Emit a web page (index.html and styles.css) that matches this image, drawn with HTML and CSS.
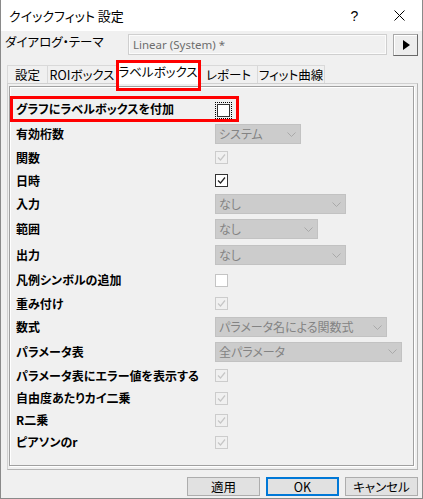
FILE: index.html
```html
<!DOCTYPE html>
<html lang="ja">
<head>
<meta charset="utf-8">
<title>クイックフィット 設定</title>
<link rel="stylesheet" href="styles.css">
</head>
<body>
<div class="window">
  <div class="titlebar">
    <span class="title">クイックフィット 設定</span>
    <span class="tb-btn help">?</span>
    <span class="tb-btn close"><svg width="11" height="11" viewBox="0 0 11 11"><path d="M0.5 0.5 L10.5 10.5 M10.5 0.5 L0.5 10.5" stroke="#000" stroke-width="1" fill="none"/></svg></span>
  </div>

  <div class="theme">
    <span class="theme-label">ダイアログ・テーマ</span>
    <div class="theme-box">Linear (System) *</div>
    <div class="arrow-btn"><svg width="7" height="10" viewBox="0 0 7 10"><polygon points="0,0 7,5 0,10" fill="#000"/></svg></div>
  </div>

  <div class="tabs">
    <div class="tab t1">設定</div>
    <div class="tab t2">ROIボックス</div>
    <div class="tab t3 active">ラベルボックス</div>
    <div class="tab t4">レポート</div>
    <div class="tab t5">フィット曲線</div>
  </div>

  <div class="page">
    <div class="group">
      <div class="hl-row">
        <span class="label">グラフにラベルボックスを付加</span>
        <span class="focus"><span class="cb on"></span></span>
      </div>
      <div class="grid">
        <span class="label">有効桁数</span>
        <div class="dd w86"><span>システム</span><svg class="chev" width="9" height="5" viewBox="0 0 9 5"><polyline points="0.5,0.5 4.5,4.5 8.5,0.5"/></svg></div>

        <span class="label">関数</span>
        <span class="cb off"><svg width="11" height="11" viewBox="0 0 11 11"><polyline points="2,5.5 4.5,8 9,2.5"/></svg></span>

        <span class="label">日時</span>
        <span class="cb on"><svg width="11" height="11" viewBox="0 0 11 11"><polyline points="2,5.5 4.5,8 9,2.5"/></svg></span>

        <span class="label">入力</span>
        <div class="dd w131"><span>なし</span><svg class="chev" width="9" height="5" viewBox="0 0 9 5"><polyline points="0.5,0.5 4.5,4.5 8.5,0.5"/></svg></div>

        <span class="label">範囲</span>
        <div class="dd w103"><span>なし</span><svg class="chev" width="9" height="5" viewBox="0 0 9 5"><polyline points="0.5,0.5 4.5,4.5 8.5,0.5"/></svg></div>

        <span class="label">出力</span>
        <div class="dd w131"><span>なし</span><svg class="chev" width="9" height="5" viewBox="0 0 9 5"><polyline points="0.5,0.5 4.5,4.5 8.5,0.5"/></svg></div>

        <span class="label">凡例シンボルの追加</span>
        <span class="cb empty"></span>

        <span class="label">重み付け</span>
        <span class="cb off"><svg width="11" height="11" viewBox="0 0 11 11"><polyline points="2,5.5 4.5,8 9,2.5"/></svg></span>

        <span class="label">数式</span>
        <div class="dd w172"><span>パラメータ名による関数式</span><svg class="chev" width="9" height="5" viewBox="0 0 9 5"><polyline points="0.5,0.5 4.5,4.5 8.5,0.5"/></svg></div>

        <span class="label">パラメータ表</span>
        <div class="dd w187"><span>全パラメータ</span><svg class="chev" width="9" height="5" viewBox="0 0 9 5"><polyline points="0.5,0.5 4.5,4.5 8.5,0.5"/></svg></div>

        <span class="label">パラメータ表にエラー値を表示する</span>
        <span class="cb off"><svg width="11" height="11" viewBox="0 0 11 11"><polyline points="2,5.5 4.5,8 9,2.5"/></svg></span>

        <span class="label">自由度あたりカイ二乗</span>
        <span class="cb off"><svg width="11" height="11" viewBox="0 0 11 11"><polyline points="2,5.5 4.5,8 9,2.5"/></svg></span>

        <span class="label">R二乗</span>
        <span class="cb off"><svg width="11" height="11" viewBox="0 0 11 11"><polyline points="2,5.5 4.5,8 9,2.5"/></svg></span>

        <span class="label">ピアソンのr</span>
        <span class="cb off"><svg width="11" height="11" viewBox="0 0 11 11"><polyline points="2,5.5 4.5,8 9,2.5"/></svg></span>
      </div>
    </div>
  </div>

  <div class="buttons">
    <button class="btn">適用</button>
    <button class="btn default">OK</button>
    <button class="btn">キャンセル</button>
  </div>
</div>
</body>
</html>
```

FILE: styles.css
```css
html, body {
  margin: 0;
  padding: 0;
}
body {
  width: 423px;
  height: 499px;
  overflow: hidden;
  background: #f0f0f0;
  font-family: "Noto Sans CJK JP", "Noto Sans", sans-serif;
  font-size: 12px;
  font-feature-settings: "palt";
  color: #000;
}

.window {
  box-sizing: border-box;
  height: 499px;
  border: 1px solid #8a8a8a;
  border-top: none;
  display: flex;
  flex-direction: column;
}

/* title bar */
.titlebar {
  height: 31px;
  flex: none;
  background: #fff;
  display: flex;
  align-items: center;
  padding-left: 8px;
}
.title {
  flex: 1;
  font-size: 13px;
  line-height: 16px;
}
.tb-btn {
  width: 45px;
  height: 31px;
  display: flex;
  align-items: center;
  justify-content: center;
}
.help {
  font-family: "Liberation Sans", sans-serif;
  font-size: 14px;
}
.close svg {
  display: block;
}

/* dialog theme */
.theme {
  display: flex;
  align-items: flex-start;
  margin-top: 3px;
  height: 22px;
  flex: none;
  padding-left: 4px;
}
.theme-label {
  width: 123px;
  flex: none;
  font-size: 12.5px;
  line-height: 16px;
}
.theme-box {
  box-sizing: border-box;
  width: 259px;
  height: 21px;
  border: 1px solid #cfcfcf;
  box-shadow: inset 1px 1px 0 #fbfbfb, inset -1px -1px 0 #fbfbfb;
  background: #f0f0f0;
  color: #6d6d6d;
  padding-left: 4px;
  line-height: 19px;
  font-family: "Noto Sans", sans-serif;
  font-size: 11.5px;
}
.arrow-btn {
  box-sizing: border-box;
  margin-left: 6px;
  width: 25px;
  height: 22px;
  border: 1px solid #a9a9a9;
  border-right-color: #696969;
  border-bottom-color: #696969;
  box-shadow: inset 1px 1px 0 #ffffff;
  background: #ededed;
  display: flex;
  align-items: center;
  justify-content: center;
}
.arrow-btn svg {
  display: block;
  margin-left: 1px;
}

/* tabs */
.tabs {
  display: flex;
  align-items: flex-end;
  height: 22px;
  margin-top: 5px;
  margin-left: 6px;
  flex: none;
  position: relative;
  z-index: 1;
}
.tab {
  box-sizing: border-box;
  height: 18px;
  border-top: 1px solid #d9d9d9;
  border-left: 1px solid #d9d9d9;
  background: #f0f0f0;
  display: flex;
  align-items: center;
  justify-content: center;
  font-size: 12.5px;
  line-height: 16px;
  white-space: nowrap;
}
.t1 { width: 40px; }
.t2 { width: 69px; }
.t3 { width: 84px; }
.t4 { width: 57px; }
.t5 { width: 68px; border-right: 1px solid #d9d9d9; }
.tab.active {
  height: 23px;
  margin-bottom: -1px;
  background: #fff;
  border-left: 1px solid #d9d9d9;
  border-right: 1px solid #d9d9d9;
  position: relative;
  padding-bottom: 2px;
}
.tab.active + .tab {
  border-left: none;
}
.tab.active::after {
  content: "";
  position: absolute;
  left: -1px;
  right: -2px;
  top: -2px;
  bottom: -7px;
  border: 3px solid #ff0000;
}

/* tab page */
.page {
  box-sizing: border-box;
  height: 387px;
  width: 411px;
  margin-left: 6px;
  flex: none;
  border: 1px solid #b4b4b4;
  border-top-color: #d0d0d0;
  border-left-color: #d0d0d0;
  padding: 2px 3px 3px 1px;
  background: #f0f0f0;
}
.group {
  box-sizing: border-box;
  height: 100%;
  border: 1px solid #a0a0a0;
  box-shadow: inset 1px 1px 0 #ffffff, 1px 1px 0 #ffffff;
  padding-top: 9px;
}

.label {
  font-weight: bold;
  line-height: 16px;
  white-space: nowrap;
}

.hl-row {
  box-sizing: border-box;
  width: 229px;
  height: 26px;
  border: 3px solid #ff0000;
  padding-left: 3px;
  display: flex;
  align-items: center;
}
.hl-row .label {
  width: 199px;
  flex: none;
}
.focus {
  box-sizing: border-box;
  width: 17px;
  height: 17px;
  border: 1px dotted #000;
  padding: 1px;
  display: block;
  margin-top: 2px;
}

.grid {
  margin-left: 6px;
  display: grid;
  grid-template-columns: 199px 1fr;
  grid-template-rows: 24px 23px 23px 24px 26px 26px 24px 23px 24px 25px 23px 22px 22px 22px;
  align-items: center;
}

/* checkbox */
.cb {
  box-sizing: border-box;
  display: block;
  width: 13px;
  height: 13px;
  border: 1px solid #333;
  background: #fff;
}
.cb svg {
  display: block;
}
.cb polyline {
  fill: none;
  stroke-width: 1.2;
}
.cb.on polyline {
  stroke: #222;
}
.cb.off {
  border-color: #cccccc;
  background: #f0f0f0;
}
.cb.off polyline {
  stroke: #c6c6c6;
}
.cb.empty {
  border-color: #c4c4c4;
  background: #fff;
}

/* combo box (disabled) */
.dd {
  box-sizing: border-box;
  height: 20px;
  border: 1px solid #c2c2c2;
  background: #cccccc;
  color: #838383;
  display: flex;
  align-items: center;
  justify-content: space-between;
  padding: 0 4px 0 3px;
  line-height: 16px;
  white-space: nowrap;
}
.chev {
  display: block;
  flex: none;
}
.chev polyline {
  fill: none;
  stroke: #a9a9a9;
  stroke-width: 1;
}
.w86 { width: 86px; }
.w103 { width: 103px; }
.w131 { width: 131px; }
.w172 { width: 172px; }
.w187 { width: 187px; }

/* bottom buttons */
.buttons {
  display: flex;
  justify-content: flex-end;
  gap: 6px;
  margin-top: 7px;
  padding-right: 4px;
  flex: none;
}
.btn {
  box-sizing: border-box;
  width: 73px;
  height: 19px;
  border: 1px solid #adadad;
  background: #e1e1e1;
  font-family: "Noto Sans CJK JP", sans-serif;
  font-feature-settings: "palt";
  font-size: 12.5px;
  line-height: 15px;
  padding: 0;
  color: #000;
}
.btn.default {
  border: 2px solid #0078d7;
}
```
